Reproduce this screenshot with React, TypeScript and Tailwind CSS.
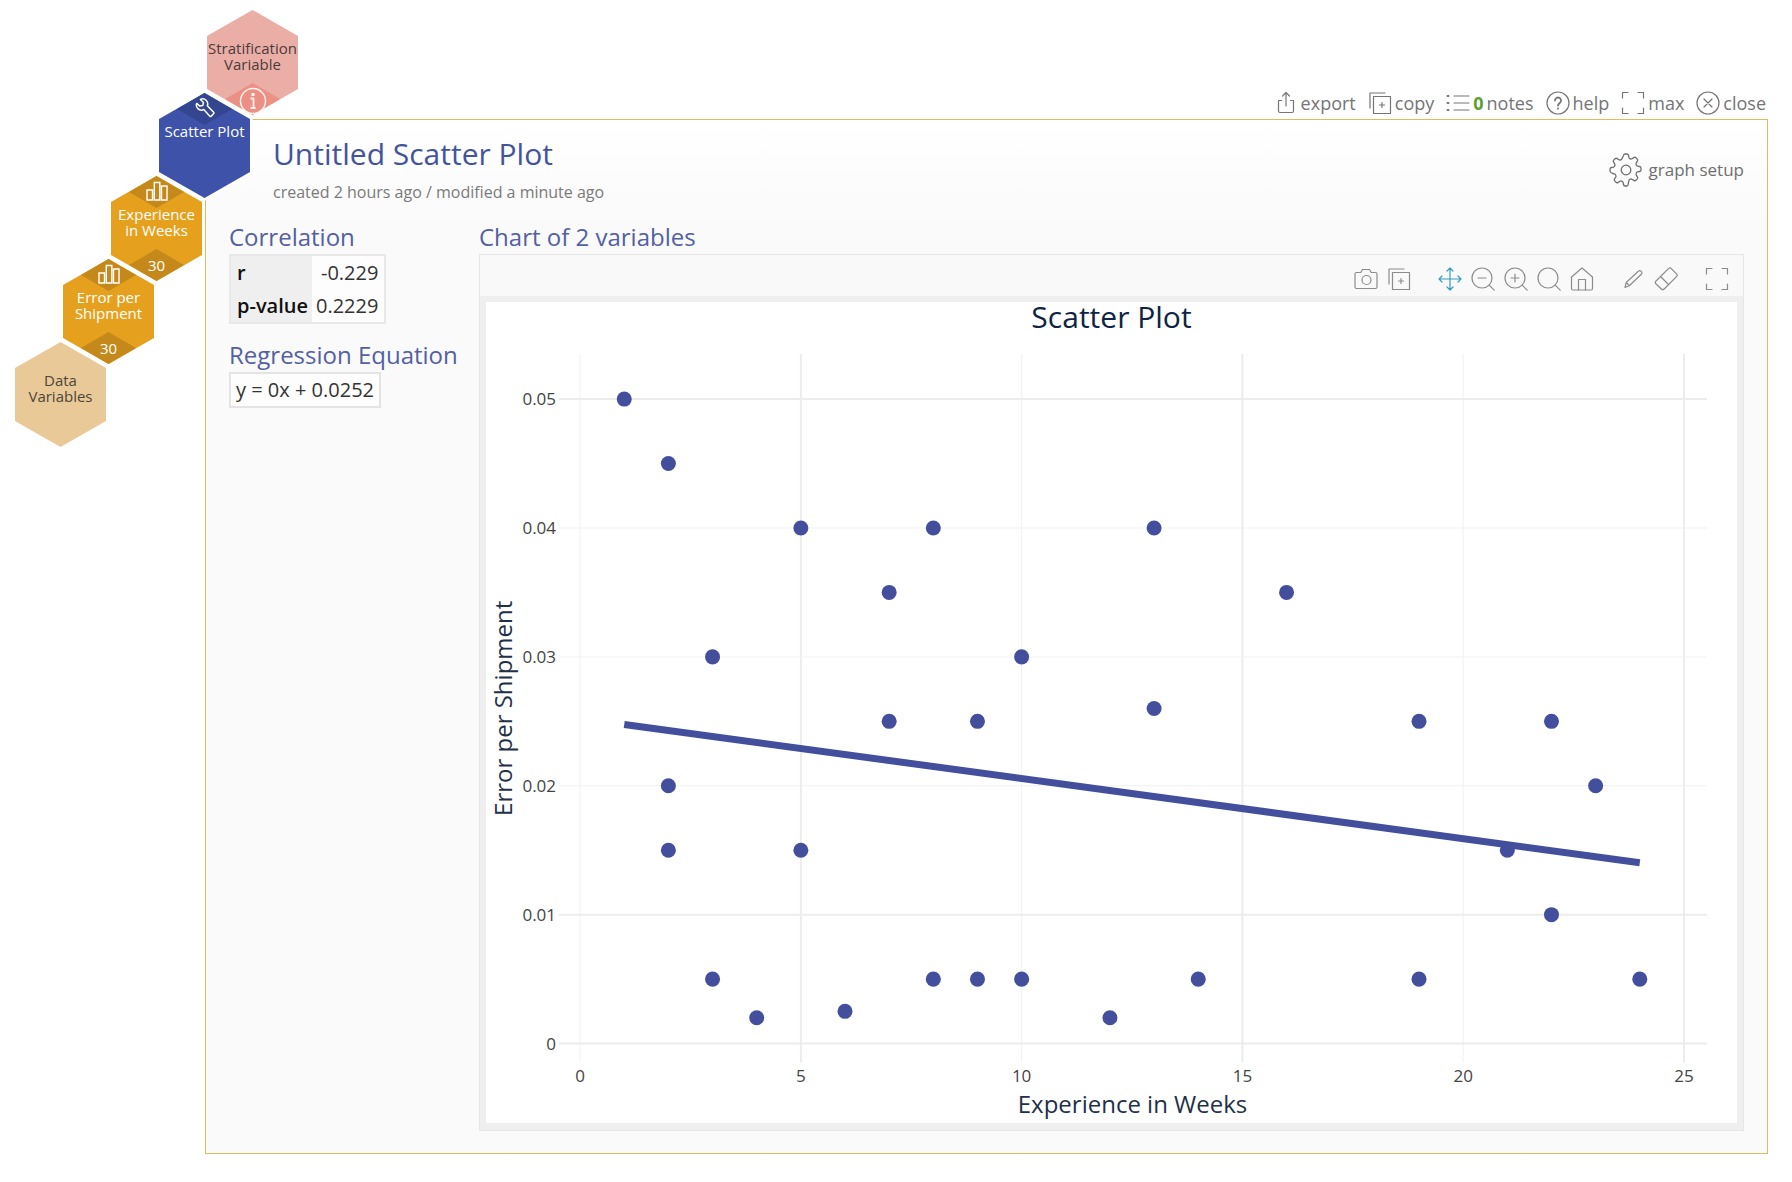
import React from "react";

// Type for the hexagon trail on the left
type HexItem = {
  label: string;
  fill: string;
  accent?: string;
  top?: "wrench" | "bars";
  bottom?: "info" | "count";
  count?: number;
  textClass: string;
  className: string;
};

const HEXES: HexItem[] = [
  {
    label: "Stratification\nVariable",
    fill: "#ebaea7",
    accent: "#ec9085",
    bottom: "info",
    textClass: "text-[#4d3b3a]",
    className: "ml-48",
  },
  {
    label: "Scatter Plot",
    fill: "#3d52a8",
    accent: "#344690",
    top: "wrench",
    textClass: "text-white",
    className: "ml-36",
  },
  {
    label: "Experience\nin Weeks",
    fill: "#e5a11e",
    accent: "#c4891a",
    top: "bars",
    bottom: "count",
    count: 30,
    textClass: "text-white",
    className: "ml-24",
  },
  {
    label: "Error per\nShipment",
    fill: "#e5a11e",
    accent: "#c4891a",
    top: "bars",
    bottom: "count",
    count: 30,
    textClass: "text-white",
    className: "ml-12",
  },
  {
    label: "Data\nVariables",
    fill: "#e9c997",
    textClass: "text-[#4d463a]",
    className: "ml-0",
  },
];

const POINTS: [number, number][] = [
  [1, 0.05],
  [2, 0.045],
  [2, 0.02],
  [2, 0.015],
  [3, 0.03],
  [3, 0.005],
  [4, 0.002],
  [5, 0.04],
  [5, 0.015],
  [6, 0.0025],
  [7, 0.035],
  [7, 0.025],
  [8, 0.04],
  [8, 0.005],
  [9, 0.025],
  [9, 0.005],
  [10, 0.03],
  [10, 0.005],
  [12, 0.002],
  [13, 0.04],
  [13, 0.026],
  [14, 0.005],
  [16, 0.035],
  [19, 0.025],
  [19, 0.005],
  [21, 0.015],
  [22, 0.025],
  [22, 0.01],
  [23, 0.02],
  [24, 0.005],
];

const X_TICKS = [
  { value: 0, strong: false },
  { value: 5, strong: true },
  { value: 10, strong: false },
  { value: 15, strong: true },
  { value: 20, strong: false },
  { value: 25, strong: true },
];

const Y_TICKS = [
  { value: 0, strong: true },
  { value: 0.01, strong: true },
  { value: 0.02, strong: false },
  { value: 0.03, strong: false },
  { value: 0.04, strong: false },
  { value: 0.05, strong: true },
];

// Data to chart coordinates
const sx = (x: number) => 94 + x * 44.12;
const sy = (y: number) => 741 - y * 12880;

const Icon: React.FC<{ children: React.ReactNode; className?: string }> = ({
  children,
  className = "h-6 w-6",
}) => (
  <svg
    viewBox="0 0 24 24"
    fill="none"
    stroke="currentColor"
    strokeWidth="1.2"
    strokeLinecap="round"
    strokeLinejoin="round"
    aria-hidden="true"
    className={`shrink-0 ${className}`}
  >
    {children}
  </svg>
);

const ExportIcon = () => (
  <Icon>
    <path d="M12 15V1.500M8.500 5 12 1.500 15.500 5" />
    <path d="M7.500 9.500h-3V20A1.500 1.500 0 0 0 6 21.500h12a1.500 1.500 0 0 0 1.500-1.500V9.500h-3" />
  </Icon>
);

const CopyIcon = () => (
  <Icon>
    <path d="M5.500 5.500h17v17h-17z" />
    <path d="M2 17V2h15" />
    <path d="M14 11.500v5M11.500 14h5" />
  </Icon>
);

const NotesIcon = () => (
  <Icon>
    <path d="M8 5h15M8 12h15M8 19h15" />
    <path d="M1.500 5h1M1.500 12h1M1.500 19h1" strokeWidth="2" />
  </Icon>
);

const HelpIcon = () => (
  <Icon>
    <circle cx="12" cy="12" r="11" />
    <path
      d="M9 9.500a3 3 0 1 1 4.800 2.400c-1.100.8-1.800 1.300-1.800 2.600M12 17.300v.4"
      strokeWidth="1.800"
    />
  </Icon>
);

const MaxIcon = () => (
  <Icon>
    <path d="M1.500 7V1.500H7M17 1.500h5.500V7M22.500 17v5.500H17M7 22.500H1.500V17" />
  </Icon>
);

const CloseIcon = () => (
  <Icon>
    <circle cx="12" cy="12" r="11" />
    <path d="m8 8 8 8M16 8l-8 8" />
  </Icon>
);

const CameraIcon = () => (
  <Icon>
    <path d="M2.500 5.500h4.300l1.700-3h7l1.700 3h4.300A1.500 1.500 0 0 1 23 7v13a1.500 1.500 0 0 1-1.500 1.500h-19A1.500 1.500 0 0 1 1 20V7a1.500 1.500 0 0 1 1.500-1.500z" />
    <circle cx="12.500" cy="13" r="4.500" />
  </Icon>
);

const MoveIcon = () => (
  <Icon>
    <path d="M12 1v22M1 12h22M9 4l3-3 3 3M9 20l3 3 3-3M4 9l-3 3 3 3M20 9l3 3-3 3" />
  </Icon>
);

const ZoomIcon: React.FC<{ sign?: string }> = ({ sign }) => (
  <Icon>
    <circle cx="11" cy="11" r="10" />
    <path d="m18.200 18.200 5 5" />
    {sign && <path d={sign} />}
  </Icon>
);

const HomeIcon = () => (
  <Icon>
    <path d="M1.500 10 12 1l10.500 9v11.500A1.500 1.500 0 0 1 21 23H3a1.500 1.500 0 0 1-1.500-1.500z" />
    <path d="M8.500 23V12.500h7V23" />
  </Icon>
);

const PencilIcon = () => (
  <Icon>
    <path d="m4 20.500 1.200-5L17.300 4.300a2.100 2.100 0 0 1 3 3L8.300 18.700zM5.200 15.500l3.100 3.200" />
  </Icon>
);

const EraserIcon = () => (
  <Icon>
    <path d="M1.800 14.200 14.500 1.600a2 2 0 0 1 2.800 0l5.200 5.200a2 2 0 0 1 0 2.800L10.200 22a2 2 0 0 1-2.800 0l-5.600-5.200a2 2 0 0 1 0-2.600zM6.500 9.500l8 8" />
  </Icon>
);

// Outline of a cog with eight rounded teeth
const GearIcon = () => (
  <svg
    viewBox="0 0 34 34"
    fill="none"
    stroke="currentColor"
    strokeWidth="1.300"
    strokeLinejoin="round"
    aria-hidden="true"
    className="h-[34px] w-[34px] shrink-0"
  >
    <circle cx="17" cy="17" r="4.800" />
    <path d="M14.500 2.500q.3-1.500 1.500-1.500h2q1.200 0 1.500 1.500l.4 2q.3 1 1.300 1.300 1 .4 1.900-.1l1.700-1.100q1.200-.8 2.100.1l1.400 1.400q.9.900.1 2.100l-1.100 1.700q-.5.900-.1 1.900.3 1 1.300 1.300l2 .4q1.500.3 1.500 1.500v2q0 1.200-1.500 1.500l-2 .4q-1 .3-1.300 1.300-.4 1 .1 1.900l1.100 1.700q.8 1.200-.1 2.100l-1.400 1.400q-.9.900-2.100.1l-1.700-1.100q-.9-.5-1.900-.1-1 .3-1.300 1.300l-.4 2Q19.200 33 18 33h-2q-1.200 0-1.500-1.500l-.4-2q-.3-1-1.300-1.300-1-.4-1.900.1l-1.700 1.100q-1.200.8-2.100-.1l-1.400-1.400q-.9-.9-.1-2.100l1.100-1.700q.5-.9.100-1.900-.3-1-1.300-1.300l-2-.4Q1 19.200 1 18v-2q0-1.200 1.500-1.500l2-.4q1-.3 1.300-1.300.4-1-.1-1.900L4.600 9.200q-.8-1.200.1-2.100l1.400-1.400q.9-.9 2.100-.1l1.700 1.100q.9.500 1.900.1 1-.3 1.300-1.300z" />
  </svg>
);

const WrenchIcon = () => (
  <Icon className="h-5 w-5">
    <path
      d="M6.500 1.800a6 6 0 0 1 8.300 7.600l7.600 7.800a1 1 0 0 1 0 1.400l-3 3.200a1 1 0 0 1-1.500 0l-7.400-8A6 6 0 0 1 2 6.500l3.800 3.200 3.600-.8.800-3.500z"
      strokeWidth="1.800"
    />
  </Icon>
);

const BarsIcon = () => (
  <svg
    viewBox="0 0 22 20"
    fill="none"
    stroke="currentColor"
    strokeWidth="1.400"
    aria-hidden="true"
    className="h-5 w-[22px]"
  >
    <path d="M1 9h5.500v10H1zM8.300 1.500h5.500V19H8.300zM15.500 5H21v14h-5.500z" />
  </svg>
);

const InfoIcon = () => (
  <svg
    viewBox="0 0 28 28"
    fill="none"
    stroke="currentColor"
    strokeWidth="1.500"
    aria-hidden="true"
    className="mt-1 h-7 w-7 text-[#fff1ef]"
  >
    <circle cx="14" cy="14" r="12.500" />
    <path d="M14 6v3" strokeWidth="3" />
    <path d="M11.500 11.500h3v9M11.500 21h5" strokeWidth="1.800" />
  </svg>
);

const Hexagon: React.FC<{ item: HexItem }> = ({ item }) => (
  <button
    type="button"
    className={`relative -mb-[22px] flex h-[105px] w-[91px] flex-col items-center ${item.className} ${item.textClass}`}
  >
    <svg
      viewBox="0 0 91 105"
      aria-hidden="true"
      className="absolute inset-0 h-full w-full overflow-visible"
    >
      <path
        d="M45.500 0 91 26v53l-45.500 26L0 79V26z"
        fill={item.fill}
        stroke="#fff"
        strokeWidth="5"
        paintOrder="stroke"
      />
      {item.top && (
        <path d="M45.500 0 73 16 45.500 32 18 16z" fill={item.accent} />
      )}
      {item.bottom && (
        <path d="M45.500 73 73 89l-27.500 16L18 89z" fill={item.accent} />
      )}
    </svg>
    <span className="relative flex h-[30px] shrink-0 items-center">
      {item.top === "wrench" && <WrenchIcon />}
      {item.top === "bars" && <BarsIcon />}
    </span>
    <span className="relative flex-1 whitespace-pre text-center text-[15px] leading-4">
      {item.label}
    </span>
    <span className="relative flex h-8 shrink-0 items-center text-[15px]">
      {item.bottom === "info" && <InfoIcon />}
      {item.bottom === "count" && item.count}
    </span>
  </button>
);

const ScatterChart = () => (
  <svg
    viewBox="0 0 1250 820"
    className="block h-auto w-full overflow-visible bg-white"
    role="img"
    aria-label="Scatter Plot"
  >
    {X_TICKS.map(({ value, strong }) => (
      <g key={value}>
        <path
          d={`M${sx(value)} 52V760`}
          stroke={strong ? "#ececec" : "#f1f1f1"}
          strokeWidth={strong ? 2 : 1}
        />
        <text
          x={sx(value)}
          y="779"
          textAnchor="middle"
          fontSize="17"
          fill="#444"
        >
          {value}
        </text>
      </g>
    ))}
    {Y_TICKS.map(({ value, strong }) => (
      <g key={value}>
        <path
          d={`M73 ${sy(value)}H1220`}
          stroke={strong ? "#ececec" : "#f1f1f1"}
          strokeWidth={strong ? 2 : 1}
        />
        <text
          x="70"
          y={sy(value) + 6}
          textAnchor="end"
          fontSize="17"
          fill="#444"
        >
          {value}
        </text>
      </g>
    ))}
    {POINTS.map(([x, y]) => (
      <circle key={`${x}-${y}`} cx={sx(x)} cy={sy(y)} r="7.500" fill="#434f9c" />
    ))}
    <path
      d={`M${sx(1)} ${sy(0.02476)}L${sx(24)} ${sy(0.01403)}`}
      stroke="#434f9c"
      strokeWidth="7"
    />
    <text x="625" y="26" textAnchor="middle" fontSize="30" fill="#0f2444">
      Scatter Plot
    </text>
    <text x="646" y="810" textAnchor="middle" fontSize="24" fill="#1f3049">
      Experience in Weeks
    </text>
    <text
      transform="translate(26 406) rotate(-90)"
      textAnchor="middle"
      fontSize="24"
      fill="#1f3049"
    >
      Error per Shipment
    </text>
  </svg>
);

const ChartTools = () => (
  <div className="flex h-[41px] items-center justify-end gap-[9px] bg-[#f9f9f9] pr-[14px] pt-1.5 text-[#8c8c8c]">
    <button type="button" aria-label="Snapshot">
      <CameraIcon />
    </button>
    <button type="button" aria-label="Copy chart">
      <CopyIcon />
    </button>
    <button type="button" aria-label="Pan" className="ml-[18px] text-[#3a9cc0]">
      <MoveIcon />
    </button>
    <button type="button" aria-label="Zoom out">
      <ZoomIcon sign="M7 11h8" />
    </button>
    <button type="button" aria-label="Zoom in">
      <ZoomIcon sign="M7 11h8M11 7v8" />
    </button>
    <button type="button" aria-label="Zoom">
      <ZoomIcon />
    </button>
    <button type="button" aria-label="Reset">
      <HomeIcon />
    </button>
    <button type="button" aria-label="Draw" className="ml-[18px]">
      <PencilIcon />
    </button>
    <button type="button" aria-label="Erase">
      <EraserIcon />
    </button>
    <button type="button" aria-label="Full screen" className="ml-[18px]">
      <MaxIcon />
    </button>
  </div>
);

const App: React.FC = () => {
  return (
    <div className="relative min-h-screen bg-white pb-7 font-['Open_Sans','Noto_Sans',sans-serif]">
      {/* PANEL ACTIONS */}
      <header className="mr-[26px] flex h-[119px] items-end justify-end gap-3 text-[18px] text-[#757575]">
        <button type="button" className="flex h-8 items-center gap-[3px]">
          <ExportIcon />
          export
        </button>
        <button type="button" className="flex h-8 items-center gap-[3px]">
          <CopyIcon />
          copy
        </button>
        <button type="button" className="flex h-8 items-center gap-[3px]">
          <NotesIcon />
          <b className="font-bold text-[#5c9e31]">0</b>
          <span>notes</span>
        </button>
        <button type="button" className="flex h-8 items-center gap-[3px]">
          <HelpIcon />
          help
        </button>
        <button type="button" className="flex h-8 items-center gap-[3px]">
          <MaxIcon />
          max
        </button>
        <button type="button" className="flex h-8 items-center gap-[3px]">
          <CloseIcon />
          close
        </button>
      </header>

      {/* PANEL */}
      <main className="ml-[205px] mr-6 border border-[#dfbc62] bg-[#fafafa] bg-linear-to-b from-white to-[#fafafa] to-10% px-[23px] pb-[22px]">
        <div className="flex h-[100px] items-start justify-between">
          <div className="pl-11 pt-3">
            <h1 className="text-[30px] leading-[44px] text-[#43549f]">
              Untitled Scatter Plot
            </h1>
            <p className="pt-1 text-base leading-6 text-[#7a7a7a]">
              created 2 hours ago / modified a minute ago
            </p>
          </div>
          <button
            type="button"
            className="mt-[33px] flex items-center gap-1.5 text-[17px] text-[#6f6f6f]"
          >
            <GearIcon />
            graph setup
          </button>
        </div>

        <div className="flex items-start">
          <aside className="w-[250px] shrink-0 text-[20px] text-[#333]">
            <h2 className="text-2xl leading-[34px] text-[#5360a5]">
              Correlation
            </h2>
            <table className="border-2 border-[#e8e8e8] bg-[#fdfdfd]">
              <tbody>
                <tr className="h-[34px]">
                  <th
                    scope="row"
                    className="bg-[#efefef] pl-1.5 pr-1 text-left font-semibold text-[#111]"
                  >
                    r
                  </th>
                  <td className="pl-1 pr-1.5 text-right">-0.229</td>
                </tr>
                <tr className="h-[34px]">
                  <th
                    scope="row"
                    className="bg-[#efefef] pl-1.5 pr-1 text-left font-semibold text-[#111]"
                  >
                    p-value
                  </th>
                  <td className="pl-1 pr-1.5 text-right">0.2229</td>
                </tr>
              </tbody>
            </table>
            <h2 className="mt-[14px] text-2xl leading-[34px] text-[#5360a5]">
              Regression Equation
            </h2>
            <p className="inline-block border-2 border-[#e4e4e4] bg-[#fdfdfd] px-[5px] leading-8">
              y = 0x + 0.0252
            </p>
          </aside>

          <section className="min-w-0 flex-1">
            <h2 className="text-2xl leading-[34px] text-[#5360a5]">
              Chart of 2 variables
            </h2>
            <div className="border border-[#e6e6e6]">
              <ChartTools />
              <div className="bg-[#efefef] px-1.5 pb-[7px] pt-1.5">
                <ScatterChart />
              </div>
            </div>
          </section>
        </div>
      </main>

      {/* HEXAGON TRAIL, lies over the panel's corner */}
      <nav
        aria-label="Variables"
        className="absolute left-[15px] top-[10px] flex flex-col"
      >
        {HEXES.map((item) => (
          <Hexagon key={item.label} item={item} />
        ))}
      </nav>
    </div>
  );
};

export default App;
